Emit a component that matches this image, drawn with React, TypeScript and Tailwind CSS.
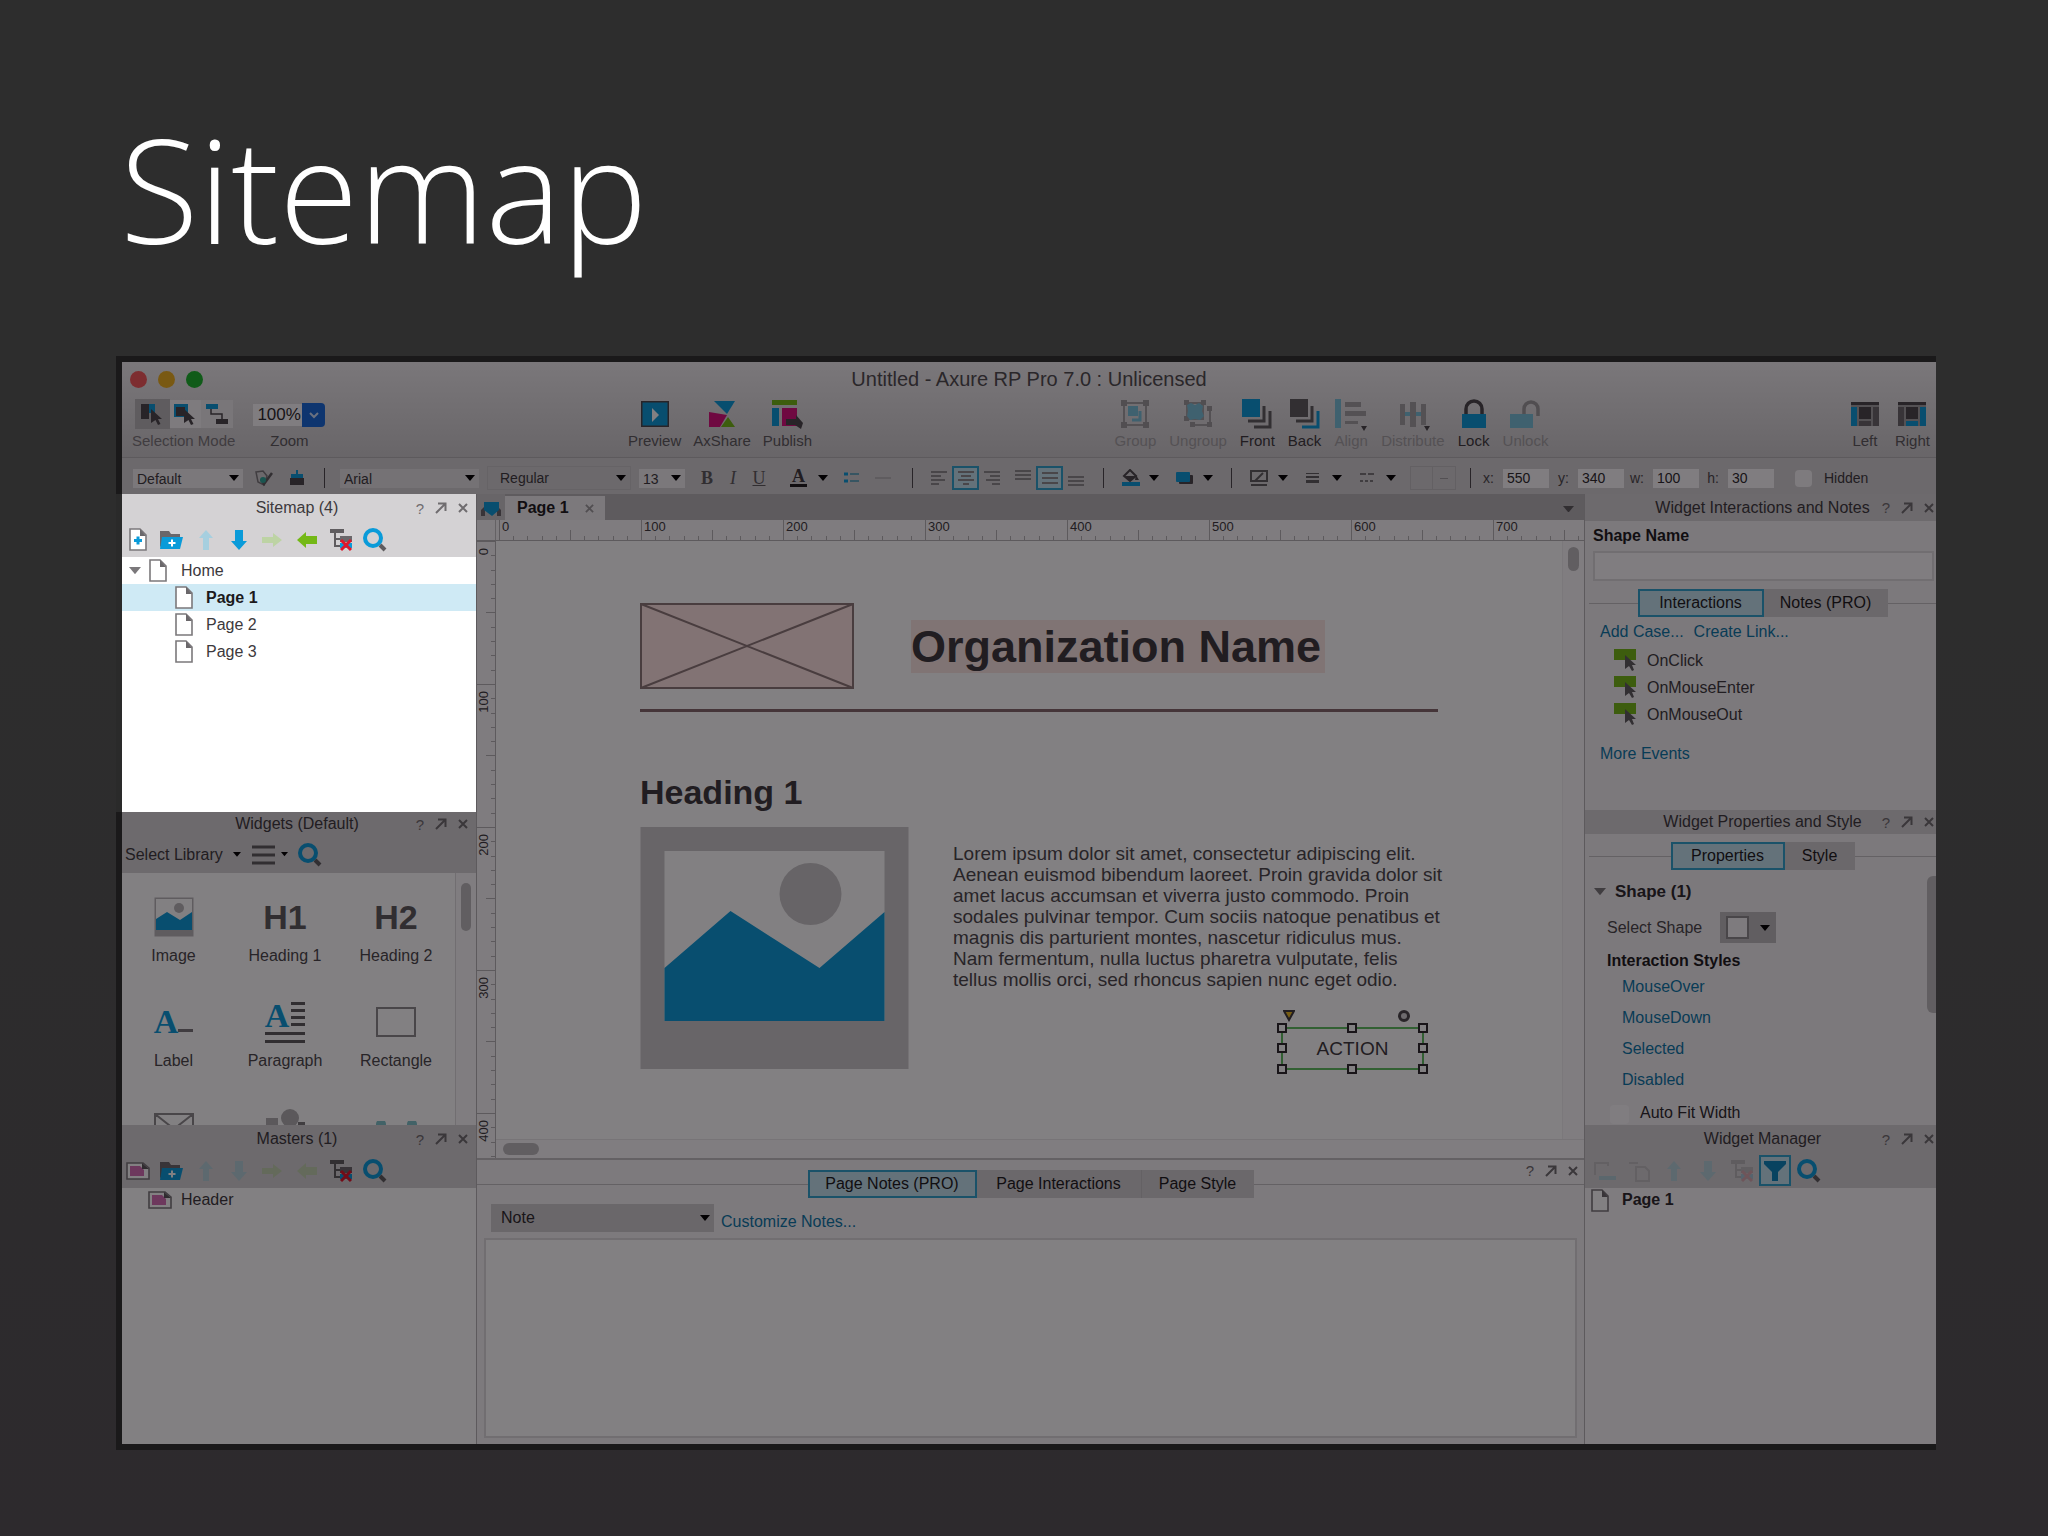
import React from "react";

const BLUE = "#0a9bd9";
const DARK = "#4a474a";
const GREEN = "#74b816";

type Kids = { children?: React.ReactNode };

/* ---------- small glyphs ---------- */

function Caret({ size = 10, color = "#000" }: { size?: number; color?: string }) {
  return (
    <svg width={size} height={size * 0.6} viewBox="0 0 10 6" aria-hidden="true" className="pointer-events-none shrink-0">
      <path d="M0 0H10L5 6Z" fill={color} />
    </svg>
  );
}

function PopOut() {
  return (
    <svg width="12" height="12" viewBox="0 0 12 12" fill="none" stroke="#6f6c6f" strokeWidth="2" aria-hidden="true">
      <path d="M1 11L10 2M3 1.5H10.5V9" />
    </svg>
  );
}

function Cross({ size = 10, color = "#6f6c6f" }: { size?: number; color?: string }) {
  return (
    <svg width={size} height={size} viewBox="0 0 10 10" fill="none" stroke={color} strokeWidth="2" aria-hidden="true">
      <path d="M1 1L9 9M9 1L1 9" />
    </svg>
  );
}

function PageIcon({ plus = false }: { plus?: boolean }) {
  return (
    <svg width="18" height="23" viewBox="0 0 18 23" aria-hidden="true" className="shrink-0">
      <path d="M1 1H11L17 7V22H1Z" fill="#fff" stroke="#7b787b" strokeWidth="1.6" />
      <path d="M11 1V8H17Z" fill="#6a676a" />
      {plus && <path d="M9 8.500V16.500M5 12.500H13" stroke={BLUE} strokeWidth="3" />}
    </svg>
  );
}

function MasterIcon() {
  return (
    <svg width="24" height="18" viewBox="0 0 24 18" aria-hidden="true" className="shrink-0">
      <path d="M1 1H17L23 6V17H1Z" fill="#fff" stroke="#7b787b" strokeWidth="1.6" />
      <path d="M4 4H14L18 8V14H4Z" fill="#d56fb4" />
      <path d="M16 1V7H23Z" fill="#5a575a" />
    </svg>
  );
}

function FolderIcon() {
  return (
    <svg width="23" height="20" viewBox="0 0 23 20" aria-hidden="true">
      <path d="M0 18V1H9L11 4H20V9H4Z" fill="#6a676a" />
      <path d="M2 7H23L20 19H0Z" fill={BLUE} />
      <path d="M12 9.500V16.500M8.500 13H15.500" stroke="#fff" strokeWidth="2" />
    </svg>
  );
}

function Arrow({ dir, color }: { dir: "up" | "down" | "left" | "right"; color: string }) {
  const d = {
    up: "M11 1L18 9H14V21H8V9H4Z",
    down: "M11 21L19 12H15V1H7V12H3Z",
    left: "M1 11L10 3V7H21V15H10V19Z",
    right: "M21 11L12 4V8H1V14H12V18Z",
  }[dir];
  return (
    <svg width="22" height="22" viewBox="0 0 22 22" aria-hidden="true">
      <path d={d} fill={color} />
    </svg>
  );
}

function DeleteTree({ faded = false }: { faded?: boolean }) {
  return (
    <svg width="24" height="24" viewBox="0 0 24 24" fill="none" aria-hidden="true" opacity={faded ? 0.22 : 1}>
      <path d="M1 3H15" stroke="#5f5c5f" strokeWidth="4" />
      <path d="M6 5V19M6 11H11M6 18H11" stroke="#5f5c5f" strokeWidth="2" />
      <path d="M11 8H23V14H11Z" fill="#6a676a" />
      <path d="M11 15H23V20H11Z" fill={BLUE} />
      <path d="M12 12L22 22M22 12L12 22" stroke="#e0162b" strokeWidth="3" />
    </svg>
  );
}

function SearchIcon() {
  return (
    <svg width="24" height="24" viewBox="0 0 24 24" fill="none" aria-hidden="true">
      <circle cx="10" cy="10" r="8" stroke={BLUE} strokeWidth="4" />
      <path d="M17 17L22 22" stroke="#5f5c5f" strokeWidth="4" />
    </svg>
  );
}

const CURSOR = "M0 0L11 10H7L9.500 15L7 16L4.500 11L0 14Z";

/* ---------- reusable parts ---------- */

function IconButton({ label, children, className = "" }: Kids & { label: string; className?: string }) {
  return (
    <button aria-label={label} className={"flex shrink-0 items-center justify-center " + className}>
      {children}
    </button>
  );
}

function PanelActions({ className }: { className: string }) {
  return (
    <div className={"flex items-center gap-[11px] justify-self-end text-[15px] leading-none text-[#6f6c6f] " + className}>
      <button aria-label="Help">?</button>
      <IconButton label="Pop out"><PopOut /></IconButton>
      <IconButton label="Close"><Cross /></IconButton>
    </div>
  );
}

function PanelTitle({ children, side = "left", className = "h-7" }: Kids & { side?: "left" | "right"; className?: string }) {
  return (
    <div
      className={
        "grid grid-cols-[1fr_auto_1fr] items-center bg-[#d4d2d4] " + (side === "left" ? "pr-1 " : "pl-1 ") + className
      }
    >
      <span />
      <h2 className="text-[16px] leading-5 text-[#3c393c]">{children}</h2>
      <PanelActions className={side === "left" ? "pr-1" : "pr-[2px]"} />
    </div>
  );
}

function TreeToolbar({ children }: Kids) {
  return <div className="flex h-[35px] items-center bg-[#d4d2d4]">{children}</div>;
}

function Tool({ label, tone, children }: Kids & { label: string; tone: string }) {
  return (
    <button className={"flex flex-col items-center text-[15px] " + tone}>
      <span className="flex h-[34px] items-center pt-0.5">{children}</span>
      <span className="leading-[22px]">{label}</span>
    </button>
  );
}

function Pick({ label, value, className }: { label: string; value: string; className: string }) {
  return (
    <span className={"relative flex shrink-0 items-center " + className}>
      <select aria-label={label} className="h-full w-full appearance-none bg-transparent pl-1 outline-none">
        <option>{value}</option>
      </select>
      <span className="pointer-events-none absolute right-1 flex">
        <Caret />
      </span>
    </span>
  );
}

function Bar() {
  return <span className="h-5 w-px shrink-0 bg-[#4a474a]" />;
}

function SegTab({ on = false, children, className }: Kids & { on?: boolean; className: string }) {
  return (
    <button
      className={
        "h-7 text-[16px] leading-5 text-[#1c1a1c] " +
        (on ? "border-2 border-[#2ea3cc] bg-[#c3e3ee] " : "bg-[#d0ced0] ") +
        className
      }
    >
      {children}
    </button>
  );
}

function TabRow({ children }: Kids) {
  return (
    <div className="flex items-center">
      <span className="h-px flex-1 bg-[#c2c0c2]" />
      {children}
      <span className="h-px flex-1 bg-[#c2c0c2]" />
    </div>
  );
}

function TextLink({ children, className = "" }: Kids & { className?: string }) {
  return (
    <a href="#" className={"text-[16px] leading-5 text-[#0b76a6] " + className}>
      {children}
    </a>
  );
}

/* ---------- main toolbar ---------- */

function TransformFrame({ rotated = false }: { rotated?: boolean }) {
  return (
    <svg width="30" height="30" viewBox="0 0 30 30" fill="none" aria-hidden="true">
      {rotated ? (
        <>
          <path d="M4 4H20V20H4ZM24 9H27V26H8V23" stroke="#a3a1a3" strokeWidth="2" />
          {[[1, 1], [18, 1], [1, 17], [24, 7], [24, 23], [7, 23]].map(([x, y]) => (
            <rect key={x + "-" + y} x={x} y={y} width="5" height="5" fill="#9c9a9c" />
          ))}
          <path d="M4 6L8 4L12 6L16 4L20 7L19 12L21 17L17 21L12 20L7 21L4 17L5 12Z" fill="#79c0d8" />
        </>
      ) : (
        <>
          <path d="M4 4H26V26H4Z" stroke="#a3a1a3" strokeWidth="2" />
          {[[1, 1], [23, 1], [1, 23], [23, 23]].map(([x, y]) => (
            <rect key={x + "-" + y} x={x} y={y} width="6" height="6" fill="#9c9a9c" />
          ))}
          <rect x="8" y="7" width="10" height="10" fill="#79c0d8" />
          <path d="M20 12V21H12" stroke="#79c0d8" strokeWidth="3" />
        </>
      )}
    </svg>
  );
}

function Stack({ front, back }: { front: string; back: string }) {
  return (
    <svg width="30" height="30" viewBox="0 0 30 30" fill="none" aria-hidden="true">
      <rect x="0" y="0" width="18" height="18" fill={front} />
      <path d="M22 7V22H6" stroke="#5f5c5f" strokeWidth="3" />
      <path d="M28 12V28H12" stroke={back} strokeWidth="3" />
    </svg>
  );
}

function Padlock({ open = false }: { open?: boolean }) {
  return (
    <svg width="32" height="30" viewBox="0 0 32 30" fill="none" aria-hidden="true">
      <path
        d={open ? "M15 16V10A7 7 0 0 1 29 10V17" : "M8 16V10A8 8 0 0 1 24 10V16"}
        stroke={open ? "#9c9a9c" : DARK}
        strokeWidth="3.5"
      />
      {open ? <rect x="1" y="15" width="23" height="14" fill="#79c0d8" /> : <rect x="4" y="15" width="24" height="14" fill={BLUE} />}
    </svg>
  );
}

function LayoutIcon({ side }: { side: "left" | "right" }) {
  return (
    <svg width="28" height="24" viewBox="0 0 28 24" aria-hidden="true">
      <rect width="28" height="24" fill="#a3a1a3" />
      <rect width="28" height="3" fill={DARK} />
      <rect x="8" y="5" width="12" height="12" fill={DARK} />
      <rect x="0" y="5" width="6" height="19" fill={side === "left" ? BLUE : "#6a676a"} />
      <rect x="22" y="5" width="6" height="19" fill={side === "right" ? BLUE : "#6a676a"} />
      <rect x="8" y="19" width="12" height="5" fill={side === "right" ? BLUE : "#6a676a"} />
    </svg>
  );
}

function MainToolbar() {
  const off = "text-[#a3a1a3]";
  const mid = "text-[#5d5a5d]";
  const on = "text-[#3c393c]";
  return (
    <header className="bg-linear-to-b from-[#efedef] to-[#cbc9cb]">
      <div className="relative flex h-[34px] items-center justify-center">
        <div className="absolute left-2 flex gap-[11px]">
          <span className="size-[17px] rounded-full bg-[#f5595a]" />
          <span className="size-[17px] rounded-full bg-[#edb021]" />
          <span className="size-[17px] rounded-full bg-[#1bb52c]" />
        </div>
        <h2 className="text-[20px] leading-6 text-[#4f4c4f]">Untitled - Axure RP Pro 7.0 : Unlicensed</h2>
      </div>
      <div className="flex h-[62px] items-start justify-between border-b border-[#b5b3b5] pl-[10px] pr-[6px]">
        <div className="flex gap-[18px]">
          <div className="flex flex-col items-center text-[15px] text-[#7a777a]">
            <div className="flex h-[34px] items-center pt-0.5">
              <IconButton label="Select intersected" className="h-[30px] w-[35px] bg-[#b9b7b9]">
                <svg width="22" height="24" viewBox="0 0 22 24" aria-hidden="true">
                  <rect x="0" y="2" width="8" height="15" fill={DARK} />
                  <rect x="8" y="2" width="6" height="9" fill={BLUE} />
                  <path d={CURSOR} transform="translate(10 7)" fill={DARK} />
                </svg>
              </IconButton>
              <IconButton label="Select contained" className="h-[28px] w-[31px] bg-[#f6f4f6]">
                <svg width="22" height="24" viewBox="0 0 22 24" aria-hidden="true">
                  <rect x="0" y="2" width="14" height="13" fill={BLUE} />
                  <rect x="2" y="5" width="9" height="9" fill={DARK} />
                  <path d={CURSOR} transform="translate(10 7)" fill={DARK} />
                </svg>
              </IconButton>
              <IconButton label="Connector" className="h-[28px] w-[32px] bg-[#eceaec]">
                <svg width="24" height="22" viewBox="0 0 24 22" fill="none" aria-hidden="true">
                  <rect x="1" y="1" width="12" height="5" fill={BLUE} />
                  <rect x="11" y="16" width="12" height="5" fill={DARK} />
                  <path d="M6 6V11H17V16" stroke={DARK} strokeWidth="1.5" />
                </svg>
              </IconButton>
            </div>
            <span className="leading-[22px]">Selection Mode</span>
          </div>
          <label className="flex flex-col items-center text-[15px] text-[#5d5a5d]">
            <span className="flex h-[34px] items-center pt-1">
              <input defaultValue="100%" className="h-[22px] w-[49px] bg-[#fbf9fb] pl-1 text-[17px] text-[#2c292c] outline-none" />
              <span className="flex h-6 w-[23px] items-center justify-center rounded-r bg-[#1668d8]">
                <svg width="10" height="7" viewBox="0 0 10 7" fill="none" stroke="#cfe0fa" strokeWidth="2" aria-hidden="true">
                  <path d="M1 1L5 5L9 1" />
                </svg>
              </span>
            </span>
            <span className="leading-[22px]">Zoom</span>
          </label>
        </div>

        <div className="flex gap-3">
          <Tool label="Preview" tone={mid}>
            <svg width="28" height="26" viewBox="0 0 28 26" aria-hidden="true">
              <rect width="28" height="26" fill={BLUE} stroke={DARK} strokeWidth="3" />
              <path d="M11 7L18 14L11 21Z" fill="#fff" />
            </svg>
          </Tool>
          <Tool label="AxShare" tone={mid}>
            <svg width="28" height="28" viewBox="0 0 28 28" aria-hidden="true">
              <path d="M6 1H27L19 14Z" fill={BLUE} />
              <path d="M1 12L19 15L12 27H1Z" fill="#d8107c" />
              <path d="M20 17L27 27H13Z" fill={GREEN} />
            </svg>
          </Tool>
          <Tool label="Publish" tone={mid}>
            <svg width="32" height="30" viewBox="0 0 32 30" aria-hidden="true">
              <rect x="1" y="1" width="25" height="5" fill={GREEN} />
              <rect x="1" y="9" width="7" height="18" fill={BLUE} />
              <rect x="11" y="9" width="15" height="18" fill="#d8107c" />
              <path d="M15 20H25V16L32 24L30 30L24 26H15Z" fill={DARK} />
            </svg>
          </Tool>
        </div>

        <div className="flex gap-[13px]">
          <Tool label="Group" tone={off}><TransformFrame /></Tool>
          <Tool label="Ungroup" tone={off}><TransformFrame rotated /></Tool>
          <Tool label="Front" tone={on}><Stack front={BLUE} back="#5f5c5f" /></Tool>
          <Tool label="Back" tone={on}><Stack front="#5f5c5f" back={BLUE} /></Tool>
          <Tool label="Align" tone={off}>
            <svg width="34" height="34" viewBox="0 0 34 34" aria-hidden="true">
              <rect x="1" y="2" width="6" height="29" fill="#79c0d8" />
              <path d="M11 5H27V10H11ZM11 14H32V19H11ZM11 24H24V27H11Z" fill="#a3a1a3" />
              <path d="M27 29H33L30 34Z" fill={DARK} />
            </svg>
          </Tool>
          <Tool label="Distribute" tone={off}>
            <svg width="34" height="34" viewBox="0 0 34 34" aria-hidden="true">
              <path d="M4 7H9V28H4ZM14 5H20V30H14ZM25 7H30V28H25Z" fill="#a3a1a3" />
              <path d="M9 15H14V19H9ZM20 15H25V19H20Z" fill="#79c0d8" />
              <path d="M28 29H34L31 34Z" fill={DARK} />
            </svg>
          </Tool>
          <Tool label="Lock" tone={on}><Padlock /></Tool>
          <Tool label="Unlock" tone={off}><Padlock open /></Tool>
        </div>

        <div className="flex gap-4">
          <Tool label="Left" tone={mid}><LayoutIcon side="left" /></Tool>
          <Tool label="Right" tone={mid}><LayoutIcon side="right" /></Tool>
        </div>
      </div>
    </header>
  );
}

/* ---------- formatting toolbar ---------- */

function Lines({ align }: { align: "left" | "center" | "right" | "top" | "middle" | "bottom" }) {
  const d = {
    left: "M1 2H17M1 6H11M1 10H15M1 14H9",
    center: "M1 2H17M4 6H14M1 10H17M6 14H12",
    right: "M1 2H17M7 6H17M3 10H17M9 14H17",
    top: "M1 1H17M1 5H17M1 9H17",
    middle: "M1 3H17M1 8H17M1 13H17",
    bottom: "M1 7H17M1 11H17M1 15H17",
  }[align];
  return (
    <svg width="18" height="16" viewBox="0 0 18 16" fill="none" stroke="#8d8b8d" strokeWidth="2" aria-hidden="true">
      <path d={d} />
    </svg>
  );
}

function Measure({ name, value }: { name: string; value: string }) {
  return (
    <label className="flex shrink-0 items-center text-[#4a474a]">
      <span className="w-[29px] pr-[9px] text-right">{name}</span>
      <input defaultValue={value} className="h-[19px] w-[46px] bg-[#fbf9fb] pl-1 text-[#2c292c] outline-none" />
    </label>
  );
}

function FormatToolbar() {
  const box = "h-6 w-[26px]";
  const lit = "h-6 w-[27px] border-2 border-[#2ea3cc] bg-[#c3e3ee]";
  return (
    <div className="flex h-9 items-center overflow-hidden bg-[#d2d0d2] pl-[11px] pt-1 text-[14px] text-[#3c393c]">
      <Pick label="Widget style" value="Default" className="h-[19px] w-[110px] bg-[#f0eef0]" />
      <IconButton label="Edit style" className="ml-[5px] w-8">
        <svg width="18" height="17" viewBox="0 0 18 17" fill="none" aria-hidden="true">
          <path d="M1 2L8 1L12 6L9 15L3 12Z" stroke="#7b787b" strokeWidth="1.5" />
          <path d="M17 3L9 14L6 9" stroke="#5f5c5f" strokeWidth="2.5" />
          <circle cx="8" cy="10" r="3" fill="#2fa99a" />
        </svg>
      </IconButton>
      <IconButton label="Apply style" className="ml-[5px] w-6">
        <svg width="14" height="16" viewBox="0 0 14 16" aria-hidden="true">
          <rect x="6" width="2" height="6" fill={BLUE} />
          <rect x="1" y="4" width="12" height="5" fill={BLUE} />
          <rect y="8" width="14" height="7" fill={DARK} />
        </svg>
      </IconButton>
      <span className="w-[15px] shrink-0" />
      <Bar />
      <Pick label="Font family" value="Arial" className="ml-[15px] h-[19px] w-[139px] bg-[#e4e2e4]" />
      <Pick label="Font weight" value="Regular" className="ml-2 h-6 w-[144px] border border-[#c7c5c7] pl-2" />
      <Pick label="Font size" value="13" className="ml-[8px] h-[19px] w-[46px] bg-[#f0eef0]" />
      <div className="ml-[9px] flex shrink-0 items-center font-['Liberation_Serif',serif] text-[18px] leading-5 text-[#5d5a5d]">
        <button className={box + " font-bold"}>B</button>
        <button className={box + " italic"}>I</button>
        <button className={box + " underline"}>U</button>
      </div>
      <button aria-label="Text color" className="ml-[18px] flex w-[38px] shrink-0 items-center justify-between">
        <span className="border-b-[3px] border-[#1c1a1c] px-0.5 font-['Liberation_Serif',serif] text-[18px] leading-[15px] font-bold">A</span>
        <Caret />
      </button>
      <IconButton label="Bullets" className="ml-[9px] w-[30px]">
        <svg width="16" height="12" viewBox="0 0 16 12" fill="none" strokeWidth="3" aria-hidden="true">
          <path d="M0 2H4M0 9H4" stroke={BLUE} />
          <path d="M6 2H15M6 9H15" stroke="#69a8bf" strokeWidth="2" />
        </svg>
      </IconButton>
      <IconButton label="Line spacing" className="h-6 w-8">
        <svg width="16" height="4" viewBox="0 0 16 4" aria-hidden="true"><path d="M0 1H16V3H0Z" fill="#b8b6b8" /></svg>
      </IconButton>
      <span className="w-[13px] shrink-0" />
      <Bar />
      <div className="ml-[13px] flex shrink-0 items-center">
        <IconButton label="Align left" className={box}><Lines align="left" /></IconButton>
        <IconButton label="Align center" className={lit}><Lines align="center" /></IconButton>
        <IconButton label="Align right" className={box}><Lines align="right" /></IconButton>
      </div>
      <div className="ml-[5px] flex shrink-0 items-center">
        <IconButton label="Align top" className={box}><Lines align="top" /></IconButton>
        <IconButton label="Align middle" className={lit}><Lines align="middle" /></IconButton>
        <IconButton label="Align bottom" className={box}><Lines align="bottom" /></IconButton>
      </div>
      <span className="w-[14px] shrink-0" />
      <Bar />
      <button aria-label="Fill color" className="ml-[17px] flex w-[38px] shrink-0 items-center justify-between">
        <svg width="20" height="18" viewBox="0 0 20 18" aria-hidden="true">
          <path d="M3 7L9 1L15 7L9 12Z" fill="none" stroke={DARK} strokeWidth="2" />
          <path d="M4 7H15L9 12Z" fill={DARK} />
          <path d="M15 6L18 11H14Z" fill={DARK} />
          <rect x="1" y="13" width="18" height="4" fill={BLUE} />
        </svg>
        <Caret />
      </button>
      <button aria-label="Shadow" className="ml-[17px] flex w-[37px] shrink-0 items-center justify-between">
        <svg width="18" height="13" viewBox="0 0 18 13" aria-hidden="true">
          <rect x="3" y="3" width="14" height="9" rx="1" fill={DARK} />
          <rect width="14" height="10" rx="1" fill={BLUE} />
        </svg>
        <Caret />
      </button>
      <span className="w-[18px] shrink-0" />
      <Bar />
      <button aria-label="Line color" className="ml-[18px] flex w-[38px] shrink-0 items-center justify-between">
        <svg width="18" height="17" viewBox="0 0 18 17" fill="none" stroke="#5f5c5f" aria-hidden="true">
          <path d="M1 1H17V11H1ZM1 15H17" strokeWidth="2" />
          <path d="M5 11L13 3" strokeWidth="2" />
        </svg>
        <Caret />
      </button>
      <button aria-label="Line width" className="ml-[18px] flex w-[36px] shrink-0 items-center justify-between">
        <svg width="13" height="12" viewBox="0 0 13 12" aria-hidden="true">
          <path d="M0 1H13V2H0ZM0 4H13V6H0ZM0 8H13V11H0Z" fill="#5f5c5f" />
        </svg>
        <Caret />
      </button>
      <button aria-label="Line style" className="ml-[18px] flex w-[36px] shrink-0 items-center justify-between">
        <svg width="14" height="12" viewBox="0 0 14 12" fill="none" stroke="#7b787b" strokeWidth="2" aria-hidden="true">
          <path d="M0 2H14" strokeDasharray="6 2" />
          <path d="M0 9H14" strokeDasharray="3 2" />
        </svg>
        <Caret />
      </button>
      <button aria-label="Arrow style" className="ml-[14px] grid h-6 w-[46px] shrink-0 grid-cols-2 items-center justify-items-center border border-[#c0bec0]">
        <span className="h-full w-full border-r border-[#c0bec0]" />
        <span className="h-px w-2 bg-[#a09ea0]" />
      </button>
      <span className="w-[14px] shrink-0" />
      <Bar />
      <div className="ml-[3px] flex shrink-0">
        <Measure name="x:" value="550" />
        <Measure name="y:" value="340" />
        <Measure name="w:" value="100" />
        <Measure name="h:" value="30" />
      </div>
      <label className="ml-[21px] flex shrink-0 items-center gap-3">
        <input type="checkbox" className="size-[17px] appearance-none rounded-sm bg-[#f6f4f6]" />
        Hidden
      </label>
    </div>
  );
}

/* ---------- left column ---------- */

function SitemapPanel() {
  const cell = "w-[34px]";
  return (
    <section className="relative z-20 -ml-[6px] h-[318px] border-l-[6px] border-[#2a2a2a] bg-white">
      <PanelTitle>Sitemap (4)</PanelTitle>
      <TreeToolbar>
        <IconButton label="Add page" className="w-8"><PageIcon plus /></IconButton>
        <IconButton label="Add folder" className={cell}><FolderIcon /></IconButton>
        <IconButton label="Move up" className="w-9"><Arrow dir="up" color="#a6cfdf" /></IconButton>
        <IconButton label="Move down" className="w-[30px]"><Arrow dir="down" color={BLUE} /></IconButton>
        <IconButton label="Indent" className="w-9"><Arrow dir="right" color="#bdd3a4" /></IconButton>
        <IconButton label="Outdent" className={cell}><Arrow dir="left" color={GREEN} /></IconButton>
        <IconButton label="Delete" className={cell}><DeleteTree /></IconButton>
        <IconButton label="Search" className={cell}><SearchIcon /></IconButton>
      </TreeToolbar>
      <ul className="text-[16px] leading-[27px] text-[#3c393c]">
        <li className="flex items-center pl-[7px]">
          <Caret size={12} color="#7b787b" />
          <span className="ml-2 flex"><PageIcon /></span>
          <span className="ml-[14px]">Home</span>
        </li>
        {["Page 1", "Page 2", "Page 3"].map((p) => (
          <li key={p} className={"flex items-center pl-[53px] " + (p === "Page 1" ? "bg-[#cfeaf5] font-bold text-[#1c1a1c]" : "")}>
            <PageIcon />
            <span className="ml-[13px]">{p}</span>
          </li>
        ))}
      </ul>
    </section>
  );
}

function WidgetTile({ label, children }: Kids & { label: string }) {
  return (
    <button className="flex h-[105px] flex-col items-center pt-6 text-[16px] text-[#4a474a]">
      <span className="flex h-10 items-center justify-center">{children}</span>
      <span className="mt-[7px] leading-6">{label}</span>
    </button>
  );
}

function WidgetsPanel() {
  return (
    <section className="flex h-[313px] flex-col">
      <PanelTitle className="h-6">Widgets (Default)</PanelTitle>
      <div className="flex h-[37px] items-center bg-[#d4d2d4] pl-[3px] text-[16px] text-[#3c393c]">
        <button className="flex items-center gap-[10px]">
          Select Library <Caret size={8} />
        </button>
        <button aria-label="Library options" className="ml-[11px] flex items-center gap-[6px]">
          <svg width="23" height="20" viewBox="0 0 23 20" fill="none" stroke="#5d5a5d" strokeWidth="3" aria-hidden="true">
            <path d="M0 2H23M0 10H23M0 18H23" />
          </svg>
          <Caret size={7} />
        </button>
        <IconButton label="Search" className="ml-[10px]"><SearchIcon /></IconButton>
      </div>
      <div className="flex min-h-0 flex-1 overflow-hidden bg-white">
        <div className="grid flex-1 grid-cols-[103px_120px_102px] content-start">
          <WidgetTile label="Image">
            <svg width="40" height="40" viewBox="0 0 40 40" aria-hidden="true">
              <rect x="1" y="1" width="38" height="38" fill="#b9b7b9" stroke="#b9b7b9" />
              <rect x="2" y="2" width="36" height="30" fill="#fff" />
              <circle cx="25" cy="11" r="5" fill="#b9b7b9" />
              <path d="M2 22L13 15L26 23L38 15V33H2Z" fill={BLUE} />
            </svg>
          </WidgetTile>
          <WidgetTile label="Heading 1"><b className="text-[34px] leading-none text-[#5d5a5d]">H1</b></WidgetTile>
          <WidgetTile label="Heading 2"><b className="text-[34px] leading-none text-[#5d5a5d]">H2</b></WidgetTile>
          <WidgetTile label="Label">
            <span className="font-['Liberation_Serif',serif] text-[34px] leading-none font-bold text-[#0a9bd9]">A</span>
            <span className="mt-4 h-[3px] w-[15px] bg-[#7a777a]" />
          </WidgetTile>
          <WidgetTile label="Paragraph">
            <span className="flex flex-col">
              <span className="flex items-center gap-0.5">
                <span className="h-7 font-['Liberation_Serif',serif] text-[34px] leading-7 font-bold text-[#0a9bd9]">A</span>
                <span className="h-7 w-[14px] bg-[repeating-linear-gradient(#5d5a5d_0_3px,transparent_3px_7px)]" />
              </span>
              <span className="mt-0.5 h-[11px] border-y-[3px] border-[#5d5a5d]" />
            </span>
          </WidgetTile>
          <WidgetTile label="Rectangle"><span className="h-[30px] w-10 border-2 border-[#8d8b8d]" /></WidgetTile>
          <WidgetTile label="">
            <svg width="40" height="28" viewBox="0 0 40 28" fill="none" stroke="#8d8b8d" strokeWidth="2" aria-hidden="true">
              <path d="M1 1H39V27H1ZM1 1L20 16L39 1" />
            </svg>
          </WidgetTile>
          <WidgetTile label="">
            <svg width="40" height="40" viewBox="0 0 40 40" aria-hidden="true">
              <rect x="1" y="11" width="12" height="20" fill="#b0aeb0" />
              <circle cx="25" cy="11" r="9" fill="#b0aeb0" />
              <rect x="33" y="15" width="7" height="3" fill="#7b787b" />
            </svg>
          </WidgetTile>
          <WidgetTile label="">
            <svg width="44" height="12" viewBox="0 0 44 12" aria-hidden="true">
              <path d="M2 3A5 5 0 0 1 12 3V8H2ZM33 3A5 5 0 0 1 43 3V8H33Z" fill="#7fc3c9" />
            </svg>
          </WidgetTile>
        </div>
        <div className="flex w-[21px] justify-center border-l border-[#dddbdd] bg-[#faf8fa] pt-[10px]">
          <span className="h-12 w-[10px] rounded-full bg-[#bdbbbd]" />
        </div>
      </div>
    </section>
  );
}

function MastersPanel() {
  const cell = "w-[34px]";
  return (
    <section className="flex-1 bg-white">
      <PanelTitle>Masters (1)</PanelTitle>
      <TreeToolbar>
        <IconButton label="Add master" className="w-8"><MasterIcon /></IconButton>
        <IconButton label="Add folder" className={cell}><FolderIcon /></IconButton>
        <IconButton label="Move up" className="w-9"><Arrow dir="up" color="#b5d0d8" /></IconButton>
        <IconButton label="Move down" className="w-[30px]"><Arrow dir="down" color="#b5d0d8" /></IconButton>
        <IconButton label="Indent" className="w-9"><Arrow dir="right" color="#c3d2b0" /></IconButton>
        <IconButton label="Outdent" className={cell}><Arrow dir="left" color="#c3d2b0" /></IconButton>
        <IconButton label="Delete" className={cell}><DeleteTree /></IconButton>
        <IconButton label="Search" className={cell}><SearchIcon /></IconButton>
      </TreeToolbar>
      <div className="flex h-6 items-center gap-[9px] pl-[26px] text-[16px] text-[#3c393c]">
        <MasterIcon /> Header
      </div>
    </section>
  );
}

/* ---------- canvas ---------- */

const MINOR = [1, 2, 3, 4, 6, 7, 8, 9];

function RulerX({ start }: { start: number }) {
  return (
    <div className="relative h-full w-[142px] shrink-0">
      <svg width="142" height="21" viewBox="0 0 142 21" stroke="#b5b3b5" fill="none" className="absolute inset-0" aria-hidden="true">
        <path d="M0.500 0V21M71.500 10V21" />
        {MINOR.map((i) => (
          <path key={i} d={"M" + (Math.round(i * 14.2) + 0.5) + " 16V21"} />
        ))}
      </svg>
      <span className="relative block pl-[3px] text-[13px] leading-[14px] text-[#3c393c]">{start}</span>
    </div>
  );
}

function RulerY({ start }: { start: number }) {
  return (
    <div className="relative h-[143px] w-full shrink-0">
      <svg width="19" height="143" viewBox="0 0 19 143" stroke="#b5b3b5" fill="none" className="absolute inset-0" aria-hidden="true">
        <path d="M0 0.500H19M9 71.500H19" />
        {MINOR.map((i) => (
          <path key={i} d={"M14 " + (Math.round(i * 14.3) + 0.5) + "H19"} />
        ))}
      </svg>
      <span className="relative block w-[14px] rotate-180 pb-[7px] text-[13px] leading-[14px] text-[#3c393c] [writing-mode:vertical-rl]">
        {start}
      </span>
    </div>
  );
}

function Handle({ className }: { className: string }) {
  return <span className={"absolute size-[10px] border-2 border-[#2c292c] bg-white " + className} />;
}

function Artboard() {
  return (
    <div className="relative h-[598px] min-w-0 flex-1 overflow-hidden bg-white font-['Liberation_Sans',Arial,sans-serif] text-[#3c393c]">
      <svg width="214" height="86" viewBox="0 0 214 86" className="absolute top-[62px] left-[144px]" aria-hidden="true">
        <path d="M1 1H213V85H1ZM1 1L213 85M213 1L1 85" fill="#fee5e2" stroke="#8d7878" strokeWidth="2" />
      </svg>
      <h3 className="absolute top-[79px] left-[415px] bg-[#fae6e3] pr-1 text-[45px] leading-[53px] font-bold whitespace-nowrap">
        Organization Name
      </h3>
      <span className="absolute top-[168px] left-[144px] h-[3px] w-[798px] bg-[#84696c]" />
      <h4 className="absolute top-[231px] left-[144px] text-[34px] leading-10 font-bold">Heading 1</h4>
      <svg width="269" height="242" viewBox="0 0 268 242" className="absolute top-[286px] left-[144px]" aria-hidden="true">
        <rect width="268" height="242" fill="#cac8ca" />
        <rect x="24" y="24" width="220" height="170" fill="#fff" />
        <circle cx="170" cy="67" r="31" fill="#c8c6c8" />
        <path d="M24 141L90 84L179 141L244 85V194H24Z" fill={BLUE} />
      </svg>
      <p className="absolute top-[302px] left-[457px] text-[19px] leading-[21px] whitespace-pre text-[#4a474a]">
        {[
          "Lorem ipsum dolor sit amet, consectetur adipiscing elit.",
          "Aenean euismod bibendum laoreet. Proin gravida dolor sit",
          "amet lacus accumsan et viverra justo commodo. Proin",
          "sodales pulvinar tempor. Cum sociis natoque penatibus et",
          "magnis dis parturient montes, nascetur ridiculus mus.",
          "Nam fermentum, nulla luctus pharetra vulputate, felis",
          "tellus mollis orci, sed rhoncus sapien nunc eget odio.",
        ].join("\n")}
      </p>
      <div className="absolute top-[486px] left-[785px] h-[43px] w-[143px]">
        <button className="h-full w-full border-2 border-[#5fbf60] text-[19px] leading-6">ACTION</button>
        <Handle className="-top-1 -left-1" />
        <Handle className="-top-1 left-[66px]" />
        <Handle className="-top-1 -right-1" />
        <Handle className="top-4 -left-1" />
        <Handle className="top-4 -right-1" />
        <Handle className="-bottom-1 -left-1" />
        <Handle className="-bottom-1 left-[66px]" />
        <Handle className="-right-1 -bottom-1" />
        <svg width="12" height="12" viewBox="0 0 12 12" className="absolute -top-[17px] left-[2px]" aria-hidden="true">
          <path d="M1 1H11L6 10Z" fill="#e8b923" stroke="#3c393c" strokeWidth="2" />
        </svg>
        <span className="absolute -top-[17px] right-[14px] size-[12px] rounded-full border-[3px] border-[#4a474a] bg-[#d4d2d4]" />
      </div>
    </div>
  );
}

function CenterColumn() {
  return (
    <main className="flex min-w-0 flex-col border-x border-[#b5b3b5] bg-[#f5f3f5]">
      <div className="flex h-[26px] items-end bg-[#b7b5b7]">
        <span className="flex h-full w-7 items-center bg-[#cbc9cb] pt-1 pl-[4px]">
          <svg width="20" height="16" viewBox="0 0 20 16" aria-hidden="true">
            <path d="M0 15V9L4 5V15ZM20 15V9L16 5V15Z" fill="#6a676a" />
            <path d="M3 1H18V9L11 15L3 9Z" fill={BLUE} />
          </svg>
        </span>
        <div className="flex h-6 w-[100px] items-center bg-[#f2f0f2] pl-[12px]">
          <b className="text-[16px] leading-5 text-[#1c1a1c]">Page 1</b>
          <IconButton label="Close tab" className="ml-[16px]"><Cross size={9} color="#9c9a9c" /></IconButton>
        </div>
        <IconButton label="Open tabs" className="mr-[10px] ml-auto h-full pt-1"><Caret size={11} color="#5d5a5d" /></IconButton>
      </div>

      <div className="flex h-[21px] border-b border-[#b5b3b5] bg-[#f9f7f9]">
        <span className="w-[19px] shrink-0 border-r border-[#c2c0c2]" />
        <div className="ml-[3px] flex min-w-0 flex-1 overflow-hidden">
          {[0, 100, 200, 300, 400, 500, 600, 700].map((n) => (
            <RulerX key={n} start={n} />
          ))}
        </div>
      </div>

      <div className="flex h-[619px] border-b-2 border-[#c2c0c2]">
        <div className="flex w-[19px] shrink-0 flex-col overflow-hidden border-r border-[#b5b3b5] bg-[#f9f7f9]">
          {[0, 100, 200, 300, 400].map((n) => (
            <RulerY key={n} start={n} />
          ))}
        </div>
        <div className="flex min-w-0 flex-1 flex-col">
          <div className="flex">
            <Artboard />
            <div className="flex w-[22px] justify-center border-l border-[#f0eef0] bg-[#faf8fa] pt-[6px]">
              <span className="h-6 w-[11px] rounded-full bg-[#bdbbbd]" />
            </div>
          </div>
          <div className="flex flex-1 items-start border-t border-[#e9e7e9] bg-[#faf8fa] pt-[3px] pl-[7px]">
            <span className="h-3 w-9 rounded-full bg-[#bdbbbd]" />
          </div>
        </div>
      </div>

      <div className="relative pt-[10px]">
        <TabRow>
          <SegTab on className="w-[169px]">Page Notes (PRO)</SegTab>
          <SegTab className="w-[164px]">Page Interactions</SegTab>
          <SegTab className="w-[113px] border-l border-[#c2c0c2]">Page Style</SegTab>
        </TabRow>
        <div className="absolute top-0 right-0 bg-[#f5f3f5] py-[3px]">
          <PanelActions className="pr-[6px]" />
        </div>
      </div>
      <div className="flex h-10 items-center gap-[7px] pl-[14px]">
        <Pick label="Note field" value="Note" className="h-7 w-[223px] bg-[#cfcdcf] pl-1.5 text-[16px] text-[#2c292c]" />
        <TextLink className="mt-2">Customize Notes...</TextLink>
      </div>
      <textarea
        aria-label="Page notes"
        className="mx-[7px] mb-[6px] min-h-0 flex-1 resize-none border-2 border-[#dddbdd] bg-white outline-none"
      />
    </main>
  );
}

/* ---------- right column ---------- */

function EventIcon() {
  return (
    <svg width="22" height="23" viewBox="0 0 22 23" aria-hidden="true">
      <rect width="22" height="11" fill={GREEN} />
      <path d="M11 6L22 16H18L20 21L18 22L15 17L11 20Z" fill="#5f5c5f" />
    </svg>
  );
}

function InteractionsPanel() {
  return (
    <section className="flex h-[316px] flex-col">
      <PanelTitle side="right" className="h-[27px]">Widget Interactions and Notes</PanelTitle>
      <label className="flex flex-col pr-[2px] pl-2 text-[16px] font-bold text-[#1c1a1c]">
        <span className="py-[5px] leading-5">Shape Name</span>
        <input className="h-[30px] w-full border-2 border-[#dddbdd] bg-[#fbf9fb] font-normal outline-none" />
      </label>
      <div className="mt-2 pl-1">
        <TabRow>
          <SegTab on className="w-[126px]">Interactions</SegTab>
          <SegTab className="w-[124px]">Notes (PRO)</SegTab>
        </TabRow>
      </div>
      <div className="mt-[5px] flex gap-[10px] pl-[15px]">
        <TextLink>Add Case...</TextLink>
        <TextLink>Create Link...</TextLink>
      </div>
      <ul className="mt-[5px] pl-[29px] text-[16px] text-[#3c393c]">
        {["OnClick", "OnMouseEnter", "OnMouseOut"].map((e) => (
          <li key={e} className="flex h-[27px] items-center gap-[11px]">
            <EventIcon /> {e}
          </li>
        ))}
      </ul>
      <TextLink className="mt-4 ml-[15px]">More Events</TextLink>
    </section>
  );
}

function PropertiesPanel() {
  return (
    <section className="relative flex h-[315px] flex-col overflow-hidden text-[16px] text-[#4a474a]">
      <PanelTitle side="right" className="h-[26px]">Widget Properties and Style</PanelTitle>
      <div className="mt-2 pl-1">
        <TabRow>
          <SegTab on className="w-[114px]">Properties</SegTab>
          <SegTab className="w-[70px]">Style</SegTab>
        </TabRow>
      </div>
      <h3 className="mt-3 flex items-center gap-[9px] pl-[9px] text-[17px] leading-5 font-bold text-[#2c292c]">
        <Caret size={12} color="#7b787b" /> Shape (1)
      </h3>
      <div className="mt-[10px] flex items-center gap-[18px] pl-[22px]">
        Select Shape
        <button aria-label="Select shape" className="flex h-[31px] w-14 items-center justify-between bg-[#bdbbbd] px-[6px]">
          <span className="size-[23px] border-2 border-[#8d8b8d] bg-[#f6f4f6]" />
          <Caret size={10} />
        </button>
      </div>
      <h4 className="mt-2 pl-[22px] leading-5 font-bold text-[#1c1a1c]">Interaction Styles</h4>
      <div className="flex flex-col pl-[37px]">
        {["MouseOver", "MouseDown", "Selected", "Disabled"].map((s) => (
          <TextLink key={s} className="mt-[6px] mb-[5px]">{s}</TextLink>
        ))}
      </div>
      <label className="mt-[6px] flex shrink-0 items-start gap-[11px] pl-[25px] leading-6 text-[#2c292c]">
        <input type="checkbox" className="mt-1 size-[19px] appearance-none rounded bg-[#fbf9fb]" />
        Auto Fit Width
      </label>
      <span className="absolute top-[66px] right-0 h-[137px] w-[9px] rounded-l-md bg-[#bdbbbd]" />
    </section>
  );
}

function ManagerPanel() {
  const cell = "w-[34px]";
  return (
    <section className="flex-1 bg-[#f8f6f8]">
      <PanelTitle side="right">Widget Manager</PanelTitle>
      <div className="flex h-[35px] items-center bg-[#d4d2d4] pl-1">
        <IconButton label="Add state" className={cell}>
          <svg width="24" height="20" viewBox="0 0 24 20" fill="none" strokeWidth="2" aria-hidden="true">
            <path d="M1 14V2H14V5" stroke="#c0bec0" />
            <path d="M5 17H22" stroke="#b0ccd5" strokeWidth="4" />
          </svg>
        </IconButton>
        <IconButton label="Duplicate" className={cell}>
          <svg width="24" height="22" viewBox="0 0 24 22" fill="none" stroke="#c0bec0" strokeWidth="2" aria-hidden="true">
            <path d="M1 3H10M8 7H17L21 11V21H8Z" />
          </svg>
        </IconButton>
        <IconButton label="Move up" className={cell}><Arrow dir="up" color="#b5d0d8" /></IconButton>
        <IconButton label="Move down" className={cell}><Arrow dir="down" color="#b5d0d8" /></IconButton>
        <IconButton label="Delete" className={cell}><DeleteTree faded /></IconButton>
        <IconButton label="Filter" className="h-[31px] w-8 border-2 border-[#2ea3cc] bg-[#c3e3ee]">
          <svg width="22" height="20" viewBox="0 0 22 20" aria-hidden="true">
            <path d="M0 0H22V3L14 11V20H8V11L0 3Z" fill="#0b84ba" />
          </svg>
        </IconButton>
        <IconButton label="Search" className="w-9"><SearchIcon /></IconButton>
      </div>
      <div className="flex h-6 items-center gap-[13px] pl-[6px] text-[16px] font-bold text-[#2c292c]">
        <PageIcon /> Page 1
      </div>
    </section>
  );
}

export default function App() {
  return (
    <div className="flex min-h-screen flex-col bg-linear-to-b from-[#2d2d2d] from-40% to-[#2d2a2d] pt-[90px] pr-[112px] pb-[86px] pl-[116px] font-['Liberation_Sans',Arial,sans-serif]">
      <h1 className="mb-[70px] pl-1 font-['Open_Sans',sans-serif] text-[144px] leading-[196px] font-light text-white">Sitemap</h1>
      <div className="relative flex flex-1 flex-col border-y-[6px] border-l-[6px] border-[#1a191a]">
        <MainToolbar />
        <FormatToolbar />
        <div className="grid flex-1 grid-cols-[354px_minmax(0,1fr)_351px] bg-[#f3f1f3]">
          <div className="flex flex-col">
            <SitemapPanel />
            <WidgetsPanel />
            <MastersPanel />
          </div>
          <CenterColumn />
          <div className="flex flex-col">
            <InteractionsPanel />
            <PropertiesPanel />
            <ManagerPanel />
          </div>
        </div>
        <div className="pointer-events-none absolute inset-0 z-10 bg-[#050105]/50" />
      </div>
    </div>
  );
}
